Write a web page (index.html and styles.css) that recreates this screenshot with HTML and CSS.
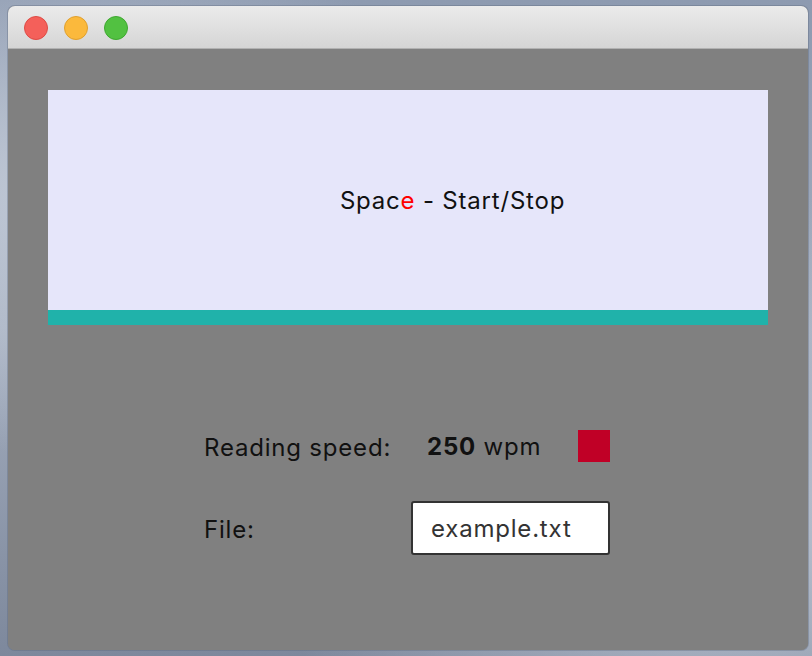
FILE: index.html
```html
<!DOCTYPE html>
<html lang="en">
<head>
<meta charset="utf-8">
<title>Speed Reader</title>
<link rel="stylesheet" href="styles.css">
</head>
<body>
<div class="window">
  <div class="titlebar">
    <span class="light red"></span>
    <span class="light yellow"></span>
    <span class="light green"></span>
  </div>
  <div class="content">
    <div class="reader">
      <div class="word">
        <span class="pre">Spac</span><span class="focus">e</span><span class="post">&nbsp;- Start/Stop</span>
      </div>
    </div>
    <div class="controls">
      <div class="label">Reading speed:</div>
      <div class="value speed">
        <span class="wpm"><b>250</b> wpm</span>
        <span class="swatch"></span>
      </div>
      <div class="label">File:</div>
      <div class="value">
        <div class="file">example.txt</div>
      </div>
    </div>
  </div>
</div>
</body>
</html>
```

FILE: styles.css
```css
html, body {
  margin: 0;
  padding: 0;
}
body {
  width: 812px;
  height: 656px;
  overflow: hidden;
  background:
    radial-gradient(ellipse at 10% 30%, #c3cbd8 0%, rgba(195,203,216,0) 40%),
    radial-gradient(ellipse at 90% 80%, #b9c2d0 0%, rgba(185,194,208,0) 45%),
    linear-gradient(180deg, #8d9ab0 0%, #a4aebf 50%, #7d889c 100%);
  font-family: Inter, "Noto Sans", "Liberation Sans", sans-serif;
  padding: 6px 4px 0 8px;
  box-sizing: border-box;
}
.window {
  width: 800px;
  height: 644px;
  border-radius: 7px;
  overflow: hidden;
  display: flex;
  flex-direction: column;
  background: #808080;
  box-shadow: 0 0 0 1px rgba(90, 100, 120, 0.35);
}
.titlebar {
  height: 43px;
  flex: none;
  border-bottom: 1px solid #b1b1b1;
  background: linear-gradient(180deg, #ebebeb 0%, #d5d5d5 100%);
  display: flex;
  align-items: flex-start;
  gap: 16px;
  padding: 10px 0 0 16px;
  box-sizing: border-box;
}
.light {
  width: 24px;
  height: 24px;
  border-radius: 50%;
  box-sizing: border-box;
}
.red { background: #f4605a; border: 1px solid #de4b45; }
.yellow { background: #fbb93c; border: 1px solid #e0a02e; }
.green { background: #52c141; border: 1px solid #3ea830; }
.content {
  flex: 1;
  background: #808080;
  padding: 41px 40px 0 40px;
}
.reader {
  height: 220px;
  background: #e6e6fa;
  border-bottom: 15px solid #20b2aa;
  display: flex;
  align-items: center;
}
.word {
  width: 100%;
  display: grid;
  grid-template-columns: 1fr auto 1fr;
  font-size: 24px;
  letter-spacing: 0.8px;
  color: #111;
  padding-top: 1px;
}
.pre { text-align: right; }
.focus { color: #ff0000; }
.post { text-align: left; }
.controls {
  margin: 105px 0 0 156px;
  width: 406px;
  display: grid;
  grid-template-columns: 207px 199px;
  grid-template-rows: 32px 54px;
  row-gap: 39px;
  align-items: center;
  font-size: 24px;
  letter-spacing: 0.8px;
  color: #111;
}
.label {
  padding-top: 2px;
}
.value.speed {
  display: flex;
  justify-content: space-between;
  align-items: center;
  padding-left: 16px;
}
.wpm b {
  font-weight: 700;
}
.swatch {
  width: 32px;
  height: 32px;
  background: #c00026;
}
.file {
  height: 54px;
  box-sizing: border-box;
  border: 2px solid #333;
  border-radius: 3px;
  background: #fff;
  color: #333;
  padding-left: 18px;
  display: flex;
  align-items: center;
}
```
